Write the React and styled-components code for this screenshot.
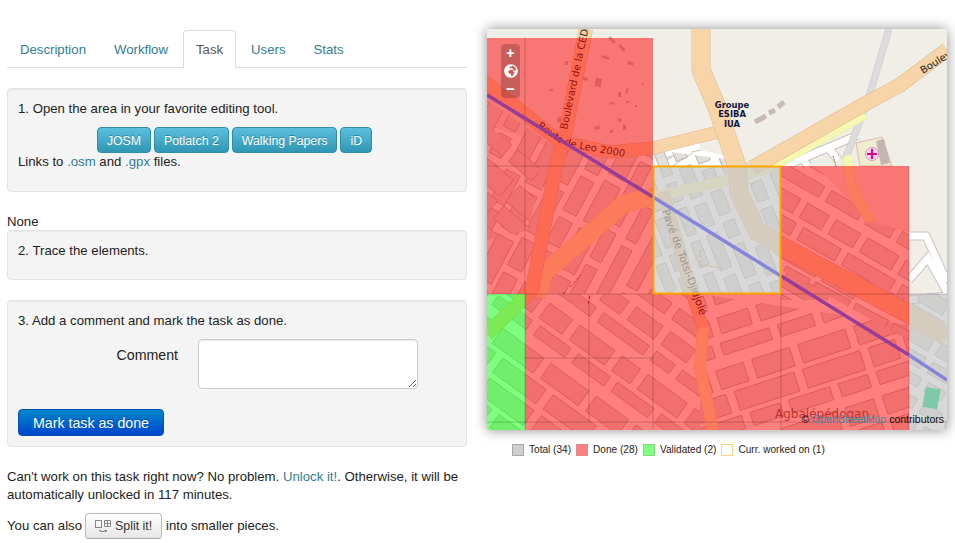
import React from 'react'
import styled, { createGlobalStyle } from 'styled-components'
import { FaGlobeAfrica } from 'react-icons/fa'

const GlobalStyle = createGlobalStyle`
  html, body { margin: 0; padding: 0; background: #fff; }
  body { font-family: "Liberation Sans", Arial, sans-serif; font-size: 13.2px; line-height: 20px; color: #222; }
`

const Page = styled.div`
  display: flex;
  align-items: flex-start;
  width: 955px;
  height: 543px;
  overflow: hidden;
  padding: 29px 0 0 7px;
  box-sizing: border-box;
`
const Left = styled.div`
  width: 460px;
  padding-top: 1px;
`
const Right = styled.div`
  width: 460px;
  margin-left: 20px;
`
const Tabs = styled.ul`
  display: flex;
  list-style: none;
  margin: 0 0 20px;
  padding: 0;
  height: 38px;
  box-sizing: border-box;
  border-bottom: 1px solid #ddd;
`
const Tab = styled.li`
  height: 38px;
  box-sizing: border-box;
  margin-right: 2px;
  padding: 9px 12px 7px;
  border: 1px solid ${p => (p.$active ? '#ddd' : 'transparent')};
  border-bottom-color: ${p => (p.$active ? '#fff' : 'transparent')};
  border-radius: 4px 4px 0 0;
  background: ${p => (p.$active ? '#fff' : 'transparent')};
  color: ${p => (p.$active ? '#555' : '#2f7d95')};
`
const Well = styled.div`
  box-sizing: border-box;
  height: ${p => p.$height}px;
  margin-bottom: ${p => p.$after}px;
  padding: 10px;
  background: #f4f4f4;
  border: 1px solid #e3e3e3;
  border-radius: 4px;
  box-shadow: inset 0 1px 1px rgba(0, 0, 0, 0.05);
`
const Step = styled.p`
  margin: 0;
`
const ToolRow = styled.div`
  display: flex;
  justify-content: center;
  gap: 3px;
  margin: 8px 0 -1px;
  padding-right: 5px;
`
const ToolButton = styled.span`
  display: block;
  height: 26px;
  box-sizing: border-box;
  padding: 3px 9px;
  color: #fff;
  text-shadow: 0 -1px 0 rgba(0, 0, 0, 0.25);
  background: linear-gradient(to bottom, #5bc0de, #2f96b4);
  border: 1px solid #2f8eab;
  border-radius: 4px;
  font-size: 12.3px;
  white-space: nowrap;
`
const A = styled.span`
  color: #2f7d95;
`
const None = styled.div`
  height: 18px;
  padding-top: 1px;
`
const FormRow = styled.div`
  display: flex;
  margin-top: 8px;
`
const Label = styled.label`
  width: 160px;
  padding-top: 6px;
  text-align: right;
  font-size: 14.2px;
  color: #222;
`
const Comment = styled.textarea`
  width: 220px;
  height: 50px;
  margin: 0 0 0 20px;
  padding: 4px 6px;
  box-sizing: border-box;
  background: #fff;
  border: 1px solid #ccc;
  border-radius: 4px;
  box-shadow: inset 0 1px 1px rgba(0, 0, 0, 0.075);
`
const DoneButton = styled.button`
  display: block;
  width: 146px;
  height: 27px;
  margin-top: 20px;
  padding: 1px 0 0;
  font: 14.2px/25px "Liberation Sans", Arial, sans-serif;
  color: #fff;
  text-shadow: 0 -1px 0 rgba(0, 0, 0, 0.25);
  background: linear-gradient(to bottom, #0088cc, #0044cc);
  border: 1px solid #0350b8;
  border-radius: 4px;
`
const Note = styled.p`
  margin: 0;
  padding-top: 21px;
  line-height: 18px;
  color: #222;
`
const SplitLine = styled.div`
  display: flex;
  align-items: center;
  margin-top: 9px;
  height: 26px;
`
const SplitButton = styled.span`
  display: flex;
  align-items: center;
  gap: 2px;
  box-sizing: border-box;
  width: 77px;
  height: 26px;
  margin: 0 4px 0 3px;
  padding-left: 9px;
  font-size: 12.4px;
  color: #333;
  background: linear-gradient(to bottom, #fff, #e6e6e6);
  border: 1px solid #bbb;
  border-bottom-color: #a2a2a2;
  border-radius: 4px;
`
const MapBox = styled.div`
  position: relative;
  width: 460px;
  height: 401px;
  overflow: hidden;
  box-shadow: 0 0 12px rgba(0, 0, 0, 0.45);
  svg { display: block; }
`
const Zoom = styled.div`
  position: absolute;
  left: 14px;
  top: 15px;
  display: flex;
  flex-direction: column;
  align-items: center;
  width: 19px;
  height: 54px;
  border-radius: 4px;
  background: rgba(0, 0, 0, 0.2);
  color: #fff;
`
const ZoomKey = styled.span`
  display: flex;
  align-items: center;
  justify-content: center;
  height: 18px;
  font: bold 15px/18px "Liberation Sans", Arial, sans-serif;
`
const Attribution = styled.div`
  position: absolute;
  right: 3px;
  bottom: 5px;
  font-size: 10.5px;
  line-height: 12px;
  color: #111;
  white-space: nowrap;
`
const OsmLink = styled.span`
  color: #3a8fa8;
`
const Legend = styled.div`
  display: flex;
  align-items: center;
  margin: 13px 0 0 25px;
  font-size: 10.1px;
  line-height: 13px;
  color: #222;
`
const Swatch = styled.i`
  display: block;
  width: 10px;
  height: 10px;
  margin-right: 5px;
  background: ${p => p.$fill};
  border: 1px solid ${p => p.$line};
`
const LegendText = styled.span`
  margin-right: 5px;
`

// small seeded generator so the street blocks stay the same on every load
const makeBlocks = ({ x, y, angle, rows, len, depth, gap, seed, reach }) => {
  let s = seed
  const rnd = () => {
    s = (s * 9301 + 49297) % 233280
    return s / 233280
  }
  const out = []
  for (let r = 0; r < rows; r++) {
    let cur = -reach + rnd() * 12
    const d = depth * (0.75 + rnd() * 0.5)
    while (cur < reach) {
      const w = len * (0.55 + rnd() * 0.9)
      out.push({ k: `${seed}-${r}-${cur}`, x: x + cur, y: y + r * (depth + gap) - (rows * (depth + gap)) / 2, w, h: d })
      cur += w + gap
    }
  }
  return { out, transform: `rotate(${angle} ${x} ${y})` }
}

const districts = [
  { id: 'a', clip: '487,100 560,150 653,150 653,294 487,294', x: 560, y: 215, angle: -62, rows: 12, len: 38, depth: 15, gap: 8, seed: 11, reach: 130 },
  { id: 'b', clip: '487,125 540,166 530,230 487,240', x: 505, y: 190, angle: 40, rows: 5, len: 32, depth: 18, gap: 8, seed: 5, reach: 70 },
  { id: 'c', clip: '487,294 700,294 700,430 487,430', x: 590, y: 362, angle: 36, rows: 12, len: 40, depth: 15, gap: 9, seed: 29, reach: 170 },
  { id: 'd', clip: '653,150 781,166 781,294 653,294', x: 717, y: 230, angle: 68, rows: 10, len: 26, depth: 12, gap: 8, seed: 41, reach: 100 },
  { id: 'e', clip: '781,166 815,166 872,222 909,232 909,300 781,300', x: 840, y: 235, angle: 30, rows: 9, len: 40, depth: 15, gap: 8, seed: 17, reach: 100 },
  { id: 'f', clip: '700,294 909,325 909,430 700,430', x: 800, y: 370, angle: -18, rows: 8, len: 48, depth: 16, gap: 9, seed: 53, reach: 130 },
  { id: 'g', clip: '781,270 909,340 909,300 781,240', x: 850, y: 300, angle: 28, rows: 4, len: 34, depth: 10, gap: 6, seed: 61, reach: 80 },
  { id: 'h', clip: '909,294 947,294 947,430 909,430', x: 930, y: 360, angle: 30, rows: 8, len: 26, depth: 12, gap: 8, seed: 71, reach: 70 },
]

const Road = ({ d, w, fill = '#f8d5a9', line = '#dcb88a', cap = 'butt' }) => (
  <>
    <path d={d} fill="none" stroke={line} strokeWidth={w + 1} strokeLinejoin="round" strokeLinecap={cap} />
    <path d={d} fill="none" stroke={fill} strokeWidth={w} strokeLinejoin="round" strokeLinecap={cap} />
  </>
)

const smallBuildings = [
  [602, 55, 8, 2.5, 18], [608, 38, 3, 8, -45], [618, 46, 3, 8, -45], [628, 61, 6, 3, 15], [565, 61, 3, 4, 0],
  [596, 78, 6, 8, 10], [583, 77, 5, 3, 10], [549, 89, 4, 2, 0], [558, 117, 5, 5, 10], [566, 96, 3, 3, 0],
  [618, 92, 3, 5, 0], [627, 88, 2, 5, 20], [626, 101, 3, 2, 0], [610, 102, 5, 2, 10], [618, 118, 4, 3, 15],
  [594, 127, 6, 3, -15], [623, 125, 3, 5, 0], [642, 83, 2, 2, 0], [635, 105, 2, 2, 0], [610, 130, 3, 3, 0],
]

const StreetPaths = 'M785 166 L858 135 M770 166 L800 152 M796 150 L808 166 M830 150 L838 160 M655 156 L700 146 M665 166 L690 150'
const RightStreets = 'M909 236 L926 236 L947 282 M909 280 L928 258 L947 292 M909 300 L947 296'

const MapDrawing = () => (
  <svg width="460" height="401" viewBox="487 29 460 401">
    <defs>
      {districts.map(d => (
        <clipPath id={`clip-${d.id}`} key={d.id}>
          <polygon points={d.clip} />
        </clipPath>
      ))}
      <path id="leo-road" d="M537 127 L561 144 L575 148 L625 157" />
    </defs>
    <rect x="487" y="29" width="460" height="401" fill="#f1eee8" />

    {/* street network */}
    <polygon points="487,125 560,150 653,155 700,150 770,166 815,166 872,222 909,232 909,294 947,294 947,430 487,430" fill="#fff" />
    <path d={StreetPaths} stroke="#c8c4be" strokeWidth="9" fill="none" />
    <path d={StreetPaths} stroke="#fff" strokeWidth="7" fill="none" />
    <path d={RightStreets} stroke="#c8c4be" strokeWidth="9" fill="none" />
    <path d={RightStreets} stroke="#fff" strokeWidth="7" fill="none" />
    {districts.map(d => {
      const { out, transform } = makeBlocks(d)
      return (
        <g key={d.id} clipPath={`url(#clip-${d.id})`}>
          <g transform={transform}>
            {out.map(b => (
              <rect key={b.k} x={b.x} y={b.y} width={b.w} height={b.h} fill="#e2dfd9" stroke="#b5aea6" strokeWidth="0.8" />
            ))}
          </g>
        </g>
      )
    })}

    {/* buildings */}
    {smallBuildings.map(([x, y, w, h, r], i) => (
      <rect key={i} x={x} y={y} width={w} height={h} fill="#c4b4b2" transform={`rotate(${r} ${x} ${y})`} />
    ))}
    <path d="M755 122 L766 116 M769 113 L775 110 M778 107 L784 102" stroke="#c9b9b5" strokeWidth="5" fill="none" />
    <polygon points="856,143 882,137 892,166 860,166" fill="#f0ecd0" stroke="#dba8a0" strokeWidth="0.8" />
    <polygon points="876,141 884,139 890,163 881,165" fill="#c4b4b2" />

    {/* roads */}
    <Road d="M889 29 L868 100 L845 160" w={6} fill="#dcdcdc" line="#c8c8c8" />
    <Road d="M848 160 L851 185 L868 217" w={10} fill="#f7f7b4" line="#e8e8a8" cap="round" />
    <Road d="M653 197 L623 204 L593 231 L545 272 L537 296" w={17} fill="#f7f7b4" line="#e8e8a8" />
    <Road d="M653 197 L720 182 L770 167 L865 114" w={10} fill="#f7f7b4" line="#e8e8a8" />
    <Road d="M703 327 L700 367 L713 430" w={11} fill="#f7f7b4" line="#e8e8a8" />
    <Road d="M663 192 L692 293 L697 310 L703 327" w={11} />
    <Road d="M586 29 L566 130 L556 166 L532 290 L487 334" w={13} />
    <Road d="M480 78 L559 141 L610 152 L653 148 L718 132" w={12} />
    <Road d="M701 29 L701 70 L716 105 L737 166 L739 193 L757 231 L781 246 L909 314 L947 337" w={18} />
    <Road d="M752 168 L863 105 L900 85 L947 50" w={14} />
    <path d="M570 287 L581 275 M563 294 L566 290 M590 296 L588 304" fill="none" stroke="#b04a10" strokeWidth="1" strokeDasharray="3 2" />
    <path d="M700 250 L700 265 L722 268" fill="none" stroke="#c08a10" strokeWidth="1" strokeDasharray="3 2" />
    <path d="M833 156 L836 166" fill="none" stroke="#a06a10" strokeWidth="1" strokeDasharray="2 1" />

    {/* labels */}
    <g fontFamily="'DejaVu Sans', sans-serif" fontSize="10" fill="#222">
      <text transform="translate(567 130) rotate(-78)">Boulevard de la CEDE</text>
      <text>
        <textPath href="#leo-road">Route de Leo 2000</textPath>
      </text>
      <text transform="translate(662 211) rotate(70)" fontSize="10.5">Pavé de Totsi-Djidjolé</text>
      <text transform="translate(923 74) rotate(-32)">Boulevard</text>
      <text x="775" y="418" fontSize="12" fill="#7a6a66">Agbalépédogan</text>
    </g>
    <g fontFamily="'DejaVu Sans', sans-serif" fontSize="8.4" fontWeight="bold" fill="#14143c" textAnchor="middle">
      <text x="732" y="108">Groupe</text>
      <text x="732" y="117">ESIBA</text>
      <text x="732" y="127">IUA</text>
    </g>
    <circle cx="872" cy="154" r="6.5" fill="#f6d8ea" stroke="#e070b0" strokeWidth="0.7" />
    <path d="M872 149 V159 M867 154 H877" stroke="#da0092" strokeWidth="2.2" />

    {/* task squares */}
    <g fill="#ff0000" fillOpacity="0.5">
      <rect x="487" y="38" width="166" height="128" />
      <rect x="487" y="166" width="166" height="128" />
      <rect x="781" y="166" width="128" height="128" />
      <rect x="525" y="294" width="384" height="136" />
    </g>
    <rect x="487" y="294" width="38" height="136" fill="#00ff00" fillOpacity="0.5" />
    <rect x="653" y="166" width="128" height="128" fill="#c7c7c7" fillOpacity="0.7" />
    <rect x="909" y="294" width="38" height="136" fill="#c7c7c7" fillOpacity="0.7" />
    <rect x="924" y="388" width="15" height="20" fill="#7fc9a8" transform="rotate(10 931 398)" />
    <path
      d="M525 38 V430 M589 294 V422 M653 166 V430 M781 294 V430 M909 166 V430 M487 166 H653 M487 294 H947 M525 358 H653 M487 422 H947"
      stroke="#000"
      strokeOpacity="0.2"
      fill="none"
    />
    <path d="M487 95 L653 197 M781 276 L909 355" stroke="#973c98" strokeWidth="3.5" fill="none" />
    <path d="M653 197 L781 276 M909 355 L947 380" stroke="#8585dc" strokeWidth="3.5" fill="none" />
    <rect x="653.5" y="166.5" width="127" height="127" fill="none" stroke="#ffa500" strokeWidth="2" />
  </svg>
)

const SplitIcon = () => (
  <svg width="18" height="14" viewBox="0 0 18 14" fill="none" stroke="#888" strokeWidth="1">
    <rect x="0.5" y="1.5" width="6" height="7" />
    <path d="M9.5 1.5 H15.5 V7.5 H9.5 Z M12.5 1.5 V7.5 M9.5 4.5 H15.5" />
    <path d="M4 11 C6 13 9 13 11 11 M11 11 V13" stroke="#555" />
  </svg>
)

export default function App() {
  return (
    <>
      <GlobalStyle />
      <Page>
        <Left>
          <Tabs>
            <Tab>Description</Tab>
            <Tab>Workflow</Tab>
            <Tab $active>Task</Tab>
            <Tab>Users</Tab>
            <Tab>Stats</Tab>
          </Tabs>
          <Well $height={104} $after={19}>
            <Step>1. Open the area in your favorite editing tool.</Step>
            <ToolRow>
              <ToolButton>JOSM</ToolButton>
              <ToolButton>Potlatch 2</ToolButton>
              <ToolButton>Walking Papers</ToolButton>
              <ToolButton>iD</ToolButton>
            </ToolRow>
            <Step>
              Links to <A>.osm</A> and <A>.gpx</A> files.
            </Step>
          </Well>
          <None>None</None>
          <Well $height={50} $after={20}>
            <Step>2. Trace the elements.</Step>
          </Well>
          <Well $height={147} $after={0}>
            <Step>3. Add a comment and mark the task as done.</Step>
            <FormRow>
              <Label>Comment</Label>
              <Comment />
            </FormRow>
            <DoneButton>Mark task as done</DoneButton>
          </Well>
          <Note>
            Can't work on this task right now? No problem. <A>Unlock it!</A>. Otherwise, it will be automatically
            unlocked in 117 minutes.
          </Note>
          <SplitLine>
            You can also
            <SplitButton>
              <SplitIcon />
              Split it!
            </SplitButton>
            into smaller pieces.
          </SplitLine>
        </Left>
        <Right>
          <MapBox>
            <MapDrawing />
            <Zoom>
              <ZoomKey>+</ZoomKey>
              <ZoomKey>
                <FaGlobeAfrica size={14} />
              </ZoomKey>
              <ZoomKey>−</ZoomKey>
            </Zoom>
            <Attribution>
              © <OsmLink>OpenStreetMap</OsmLink> contributors
            </Attribution>
          </MapBox>
          <Legend>
            <Swatch $fill="#cfcfcf" $line="#a8a8a8" />
            <LegendText>Total (34)</LegendText>
            <Swatch $fill="#ff8080" $line="#e08a8a" />
            <LegendText>Done (28)</LegendText>
            <Swatch $fill="#80ff80" $line="#80d880" />
            <LegendText>Validated (2)</LegendText>
            <Swatch $fill="#fff" $line="#ffd27f" />
            <LegendText>Curr. worked on (1)</LegendText>
          </Legend>
        </Right>
      </Page>
    </>
  )
}
